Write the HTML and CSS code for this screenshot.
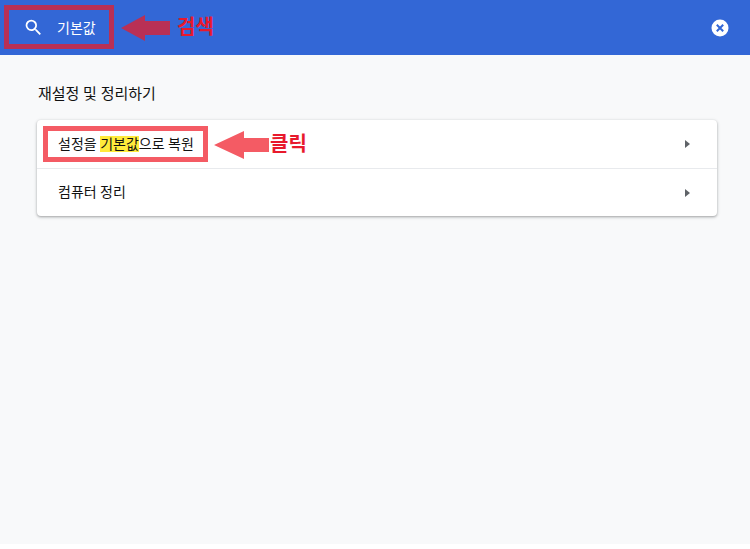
FILE: index.html
```html
<!DOCTYPE html>
<html lang="ko">
<head>
    <meta charset="UTF-8">
    <meta name="viewport" content="width=device-width, initial-scale=1.0">
    <title>설정</title>
    <link rel="stylesheet" href="styles.css">
</head>
<body>
    <div class="page">
        <header class="search-bar">
            <div class="search-left">
                <svg class="search-icon" viewBox="0 0 24 24" width="21" height="21">
                    <path fill="#fff" d="M15.5 14h-.79l-.28-.27A6.47 6.47 0 0 0 16 9.5 6.5 6.5 0 1 0 9.5 16c1.61 0 3.09-.59 4.23-1.57l.27.28v.79l5 4.99L20.49 19l-4.99-5zm-6 0C7.01 14 5 11.99 5 9.5S7.01 5 9.5 5 14 7.01 14 9.5 11.99 14 9.5 14z"/>
                </svg>
                <span class="search-text">기본값</span>
            </div>
            <svg class="clear-icon" viewBox="0 0 18 18" width="18" height="18">
                <circle cx="9" cy="9" r="8.5" fill="#fff"/>
                <path d="M5.8 5.8l6.4 6.4M12.2 5.8l-6.4 6.4" stroke="#3367d6" stroke-width="2"/>
            </svg>
        </header>

        <main class="content">
            <h2 class="section-title">재설정 및 정리하기</h2>
            <div class="card">
                <div class="row">
                    <span class="row-label">설정을 <mark class="hit">기본값</mark>으로 복원</span>
                    <span class="row-arrow"></span>
                </div>
                <div class="row row-line">
                    <span class="row-label">컴퓨터 정리</span>
                    <span class="row-arrow"></span>
                </div>
            </div>
        </main>
    </div>

    <!-- annotations on top of the screenshot -->
    <div class="note-box note-box-search"></div>
    <svg class="note-arrow note-arrow-search" viewBox="0 0 49 26" width="49" height="26">
        <polygon fill="#b93055" points="0,13 24,0 24,6 49,6 49,20 24,20 24,26"/>
    </svg>
    <span class="note-label note-label-search">검색</span>

    <div class="note-box note-box-reset"></div>
    <svg class="note-arrow note-arrow-reset" viewBox="0 0 55 28" width="55" height="28">
        <polygon fill="#f45b64" points="0,14 30,0 30,7 55,7 55,21 30,21 30,28"/>
    </svg>
    <span class="note-label note-label-reset">클릭</span>
</body>
</html>
```

FILE: styles.css
```css
html {
    background: #ffffff;
}
body {
    margin: 0;
    padding: 0;
    font-family: 'Roboto', 'Noto Sans CJK KR', sans-serif;
    color: #111111;
}
.page {
    height: 544px;
    background-color: #f8f9fa;
}
.search-bar {
    display: flex;
    align-items: center;
    justify-content: space-between;
    height: 55px;
    padding: 0 21px 0 23px;
    background-color: #3367d6;
}
.search-left {
    display: flex;
    align-items: center;
    gap: 13px;
}
.search-text {
    margin-bottom: 2px;
    color: #ffffff;
    font-size: 14px;
}
.content {
    padding: 31px 33px 0 37px;
}
.section-title {
    margin: 0 0 17px 1px;
    font-size: 15px;
    font-weight: 400;
    line-height: 17px;
}
.card {
    background-color: white;
    border-radius: 4px;
    box-shadow: 0 1px 2px rgba(60, 64, 67, 0.3), 0 1px 3px 1px rgba(60, 64, 67, 0.15);
}
.row {
    display: flex;
    align-items: center;
    justify-content: space-between;
    height: 48px;
    padding: 0 27px 0 21px;
    box-sizing: border-box;
    font-size: 14px;
}
.row-label {
    margin-bottom: 3px;
}
.row-line {
    border-top: 1px solid #e8eaed;
}
.row-arrow {
    width: 0;
    height: 0;
    border-top: 4px solid transparent;
    border-bottom: 4px solid transparent;
    border-left: 5px solid #5f6368;
}
.hit {
    display: inline-block;
    background-color: #ffeb3b;
    color: #111111;
    line-height: 16px;
}
.note-box {
    position: absolute;
    box-sizing: border-box;
    border-style: solid;
    border-width: 5px;
}
.note-box-search {
    left: 4px;
    top: 5px;
    width: 110px;
    height: 44px;
    border-color: #b93055;
}
.note-box-reset {
    left: 43px;
    top: 126px;
    width: 165px;
    height: 36px;
    border-color: #f45b64;
}
.note-arrow {
    position: absolute;
}
.note-arrow-search {
    left: 121px;
    top: 15px;
}
.note-arrow-reset {
    left: 214px;
    top: 131px;
}
.note-label {
    position: absolute;
    color: #e8192c;
    font-size: 20px;
    font-weight: 700;
    line-height: 24px;
}
.note-label-search {
    left: 177px;
    top: 15px;
}
.note-label-reset {
    left: 270px;
    top: 132px;
}
```
